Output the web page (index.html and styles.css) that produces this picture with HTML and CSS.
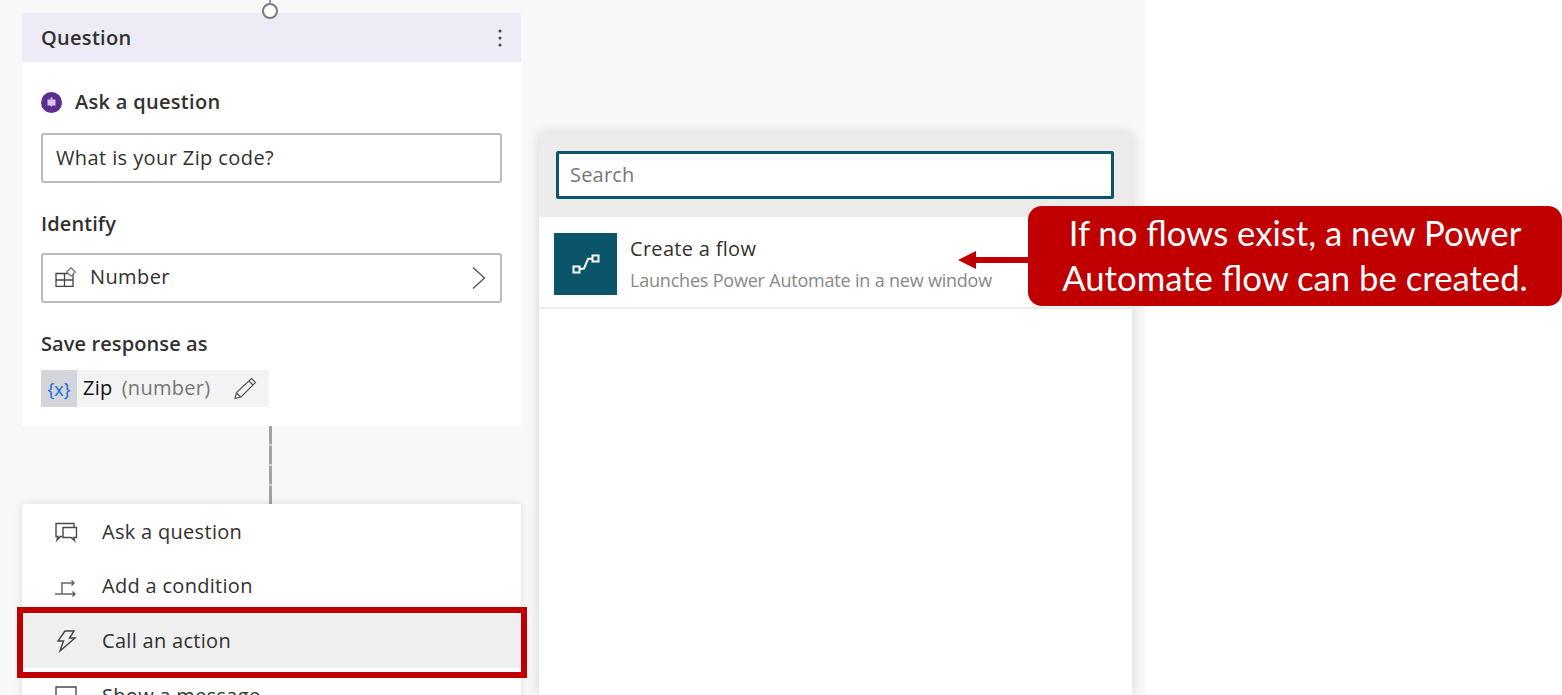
FILE: index.html
```html
<!DOCTYPE html>
<html lang="en">
<head>
  <meta charset="UTF-8">
  <meta name="viewport" content="width=device-width, initial-scale=1.0">
  <title>Create a flow</title>
  <link rel="stylesheet" href="styles.css">
</head>
<body>
<div class="canvas">
  <div class="flow-column">
    <div class="card">
      <span class="port"></span>
      <div class="card-header">
        <span>Question</span>
        <svg class="kebab" width="4" height="18" viewBox="0 0 4 18"><circle cx="2" cy="2" r="1.5"/><circle cx="2" cy="9" r="1.5"/><circle cx="2" cy="16" r="1.5"/></svg>
      </div>
      <div class="card-body">
        <div class="ask-title">
          <svg width="21" height="21" viewBox="0 0 21 21"><circle cx="10.5" cy="10.5" r="10.5" fill="#5c2d91"/><path d="M6.5 7.500h8v6h-3l-1.500 1.500-.5-1.500h-3z" fill="#d9c8ec"/><rect x="9.500" y="5.500" width="2" height="2" fill="#d9c8ec"/></svg>
          <span>Ask a question</span>
        </div>
        <div class="field">What is your Zip code?</div>
        <div class="label identify-label">Identify</div>
        <div class="field field-select">
          <svg class="type-icon" width="22" height="20" viewBox="0 0 22 20" fill="none" stroke="#444" stroke-width="1.300"><path d="M1 6.500h17v13h-17zM1 13h17M9.500 6.500v13"/><path d="M16 .8l4.300 4.200-4.300 4.200-4.300-4.200z" fill="#fff" stroke="#777"/></svg>
          <span class="field-text">Number</span>
          <svg class="chevron" width="16" height="24" viewBox="0 0 16 24" fill="none" stroke="#555" stroke-width="1.400"><path d="M2 1.500l11.500 10.500-11.500 10.500"/></svg>
        </div>
        <div class="label save-label">Save response as</div>
        <div class="chip">
          <span class="chip-icon">{x}</span>
          <span class="chip-name">Zip</span>
          <span class="chip-type">(number)</span>
          <svg class="pencil" width="24" height="24" viewBox="0 0 24 24" fill="none" stroke="#555" stroke-width="1.200"><path d="M18.500 1.500l4 4-14.500 14.500-6 1.500 1.500-6zM16 4l4 4M3.500 16l4 4"/></svg>
        </div>
      </div>
    </div>
    <div class="connector"></div>
    <div class="menu">
      <div class="menu-item">
        <svg width="24" height="24" viewBox="0 0 24 24" fill="none" stroke="#4a4a4a" stroke-width="1.400"><path d="M20 8v-3.500h-18v13h2l-1 3.500 3.500-3.500h2"/><path d="M9 8.500h13.500v10h-3l1 3-3.500-3h-8z"/></svg>
        <span>Ask a question</span>
      </div>
      <div class="menu-item">
        <svg width="24" height="24" viewBox="0 0 24 24" fill="none" stroke="#666" stroke-width="1.500"><path d="M1 20h20M18.500 17.500l2.500 2.500-2.500 2.500M8 20v-11h12M17.500 6.500l2.500 2.500-2.500 2.500"/></svg>
        <span>Add a condition</span>
      </div>
      <div class="menu-item menu-item-active">
        <svg width="24" height="24" viewBox="0 0 24 24" fill="none" stroke="#444" stroke-width="1.400"><path d="M11 2h9l-4.500 7h5.500l-15 13 3.500-10h-5.500z"/></svg>
        <span>Call an action</span>
        <div class="highlight"></div>
      </div>
      <div class="menu-item">
        <svg width="24" height="24" viewBox="0 0 24 24" fill="none" stroke="#4a4a4a" stroke-width="1.400"><path d="M2 3h20v15h-20z"/></svg>
        <span>Show a message</span>
      </div>
    </div>
  </div>

  <div class="panel">
    <div class="panel-search">
      <div class="search-box">Search</div>
    </div>
    <div class="flow-row">
      <div class="flow-icon">
        <svg width="28" height="22" viewBox="0 0 28 22" fill="none" stroke="#fff" stroke-width="2"><path d="M1.500 13.500h6v6h-6zM20.500 2.500h6v6h-6zM7.500 16l4.500-.5 4-9.500 4.500-.5"/></svg>
      </div>
      <div class="flow-text">
        <div class="flow-title">Create a flow</div>
        <div class="flow-sub">Launches Power Automate in a new window</div>
      </div>
    </div>
  </div>
</div>

<div class="callout">
  <svg class="callout-arrow" width="71" height="18" viewBox="0 0 71 18"><path d="M0 9l18-9v6h53v6h-53v6z" fill="#c00000"/></svg>
  If no flows exist, a new Power<br>Automate flow can be created.
</div>
</body>
</html>
```

FILE: styles.css
```css
html, body {
  margin: 0;
  height: 695px;
  overflow: hidden;
  background: #fff;
}
body {
  font-family: "Open Sans", "Noto Sans", sans-serif;
  color: #323130;
  position: relative;
}
.canvas {
  width: 1145px;
  height: 695px;
  background: #f8f8f8;
  display: flex;
  align-items: flex-start;
  overflow: hidden;
}
.flow-column {
  width: 499px;
  margin-left: 22px;
  padding-top: 13px;
  flex-shrink: 0;
}
.card {
  position: relative;
  background: #fff;
}
.port {
  position: absolute;
  left: 240px;
  top: -10px;
  width: 12px;
  height: 12px;
  border: 2px solid #7a7a7a;
  border-radius: 50%;
  background: #fff;
}
.port::before {
  content: "";
  position: absolute;
  left: 5px;
  top: -5px;
  width: 2px;
  height: 3px;
  background: #999;
}
.card-header {
  height: 49px;
  background: #edebf5;
  display: flex;
  align-items: center;
  justify-content: space-between;
  padding: 0 19px;
  font-size: 20px;
  font-weight: 600;
  letter-spacing: 0.3px;
}
.kebab {
  fill: #444;
}
.card-body {
  padding: 28px 19px 19px 19px;
}
.ask-title {
  display: flex;
  align-items: center;
  gap: 13px;
  height: 24px;
  font-size: 20px;
  font-weight: 600;
  letter-spacing: 0.3px;
}
.ask-title span {
  padding-bottom: 2px;
}
.field {
  height: 46px;
  box-sizing: content-box;
  margin-top: 19px;
  border: 2px solid #bdbbb8;
  border-radius: 3px;
  background: #fff;
  display: flex;
  align-items: center;
  padding: 0 13px;
  font-size: 20px;
  line-height: 24px;
  letter-spacing: 0.4px;
}
.field-select {
  margin-top: 16px;
}
.type-icon {
  margin-left: -1px;
  margin-bottom: 2px;
}
.field-text {
  margin-left: 13px;
  margin-bottom: 2px;
}
.chevron {
  margin-left: auto;
}
.label {
  font-size: 20px;
  font-weight: 600;
  letter-spacing: 0.1px;
  line-height: 26px;
}
.identify-label {
  margin-top: 28px;
}
.save-label {
  margin-top: 28px;
}
.chip {
  width: 228px;
  height: 37px;
  margin-top: 13px;
  background: #f3f3f3;
  border-radius: 2px;
  display: flex;
  align-items: center;
  font-size: 20px;
  letter-spacing: 0.3px;
}
.chip-icon {
  width: 36px;
  height: 37px;
  background: #d3d5da;
  color: #2468e0;
  display: flex;
  align-items: center;
  justify-content: center;
  font-size: 18px;
  letter-spacing: 0;
}
.chip-name {
  margin-left: 6px;
  margin-bottom: 2px;
  color: #111;
}
.chip-type {
  margin-left: 9px;
  margin-bottom: 2px;
  color: #777;
}
.pencil {
  margin-left: 22px;
}
.connector {
  width: 3px;
  height: 78px;
  margin-left: 247px;
  background: repeating-linear-gradient(#a3a3a3 0, #a3a3a3 18px, #d0d0d0 18px, #d0d0d0 20px);
}
.menu {
  background: #fff;
  box-shadow: 0 0 8px rgba(0, 0, 0, 0.12);
}
.menu-item {
  position: relative;
  height: 55px;
  display: flex;
  align-items: center;
  gap: 24px;
  padding-left: 32px;
  font-size: 20px;
  letter-spacing: 0.3px;
}
.menu-item:first-child {
  height: 54px;
}
.menu-item-active {
  background: #efefef;
}
.highlight {
  position: absolute;
  left: -5px;
  right: -6px;
  top: -6px;
  bottom: -10px;
  border: 6px solid #c00000;
}
.panel {
  width: 593px;
  height: 562px;
  margin-left: 18px;
  margin-top: 133px;
  background: #fff;
  box-shadow: 0 0 12px rgba(0, 0, 0, 0.14);
  flex-shrink: 0;
}
.panel-search {
  height: 84px;
  background: #edebe9;
  padding: 18px 18px 0 17px;
  box-sizing: border-box;
}
.search-box {
  height: 48px;
  box-sizing: border-box;
  border: 3px solid #0b556a;
  border-radius: 2px;
  background: #fff;
  display: flex;
  align-items: center;
  padding: 0 0 2px 11px;
  font-size: 20px;
  letter-spacing: 0.2px;
  color: #777;
}
.flow-row {
  height: 92px;
  box-sizing: border-box;
  border-bottom: 2px solid #edebe9;
  display: flex;
  align-items: flex-start;
  padding: 16px 0 0 15px;
  gap: 13px;
}
.flow-icon {
  width: 63px;
  height: 62px;
  background: #0b556a;
  display: flex;
  align-items: center;
  justify-content: center;
}
.flow-text {
  padding-top: 3px;
}
.flow-title {
  font-size: 20px;
  letter-spacing: 0.3px;
  line-height: 26px;
}
.flow-sub {
  margin-top: 6px;
  font-size: 18px;
  letter-spacing: -0.2px;
  line-height: 24px;
  color: #8a8886;
}
.callout {
  position: absolute;
  left: 1028px;
  top: 206px;
  width: 534px;
  height: 100px;
  box-sizing: border-box;
  padding-top: 4px;
  background: #c00000;
  border-radius: 14px;
  color: #fff;
  font-family: Lato, "Open Sans", sans-serif;
  font-size: 34.7px;
  line-height: 45px;
  text-align: center;
}
.callout-arrow {
  position: absolute;
  left: -70px;
  top: 45px;
}
```
